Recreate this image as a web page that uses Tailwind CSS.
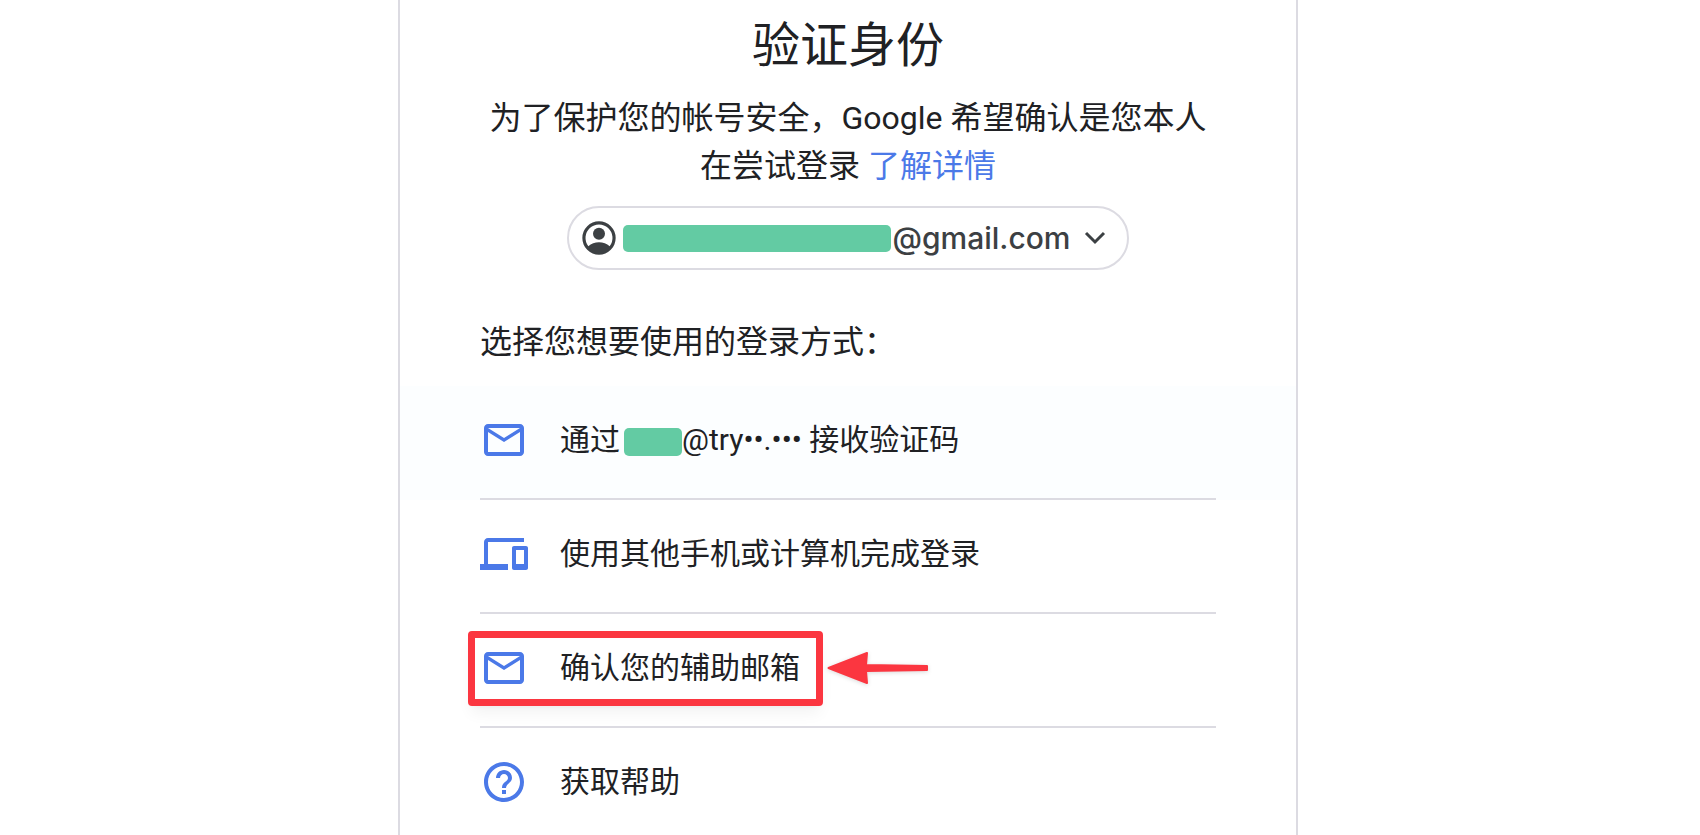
<!DOCTYPE html>
<html lang="zh-CN">
<head>
  <meta charset="utf-8">
  <meta name="viewport" content="width=device-width, initial-scale=1.0">
  <title>验证身份</title>
  <script src="https://cdn.jsdelivr.net/npm/@tailwindcss/browser@4"></script>
</head>
<body class="bg-white text-[#202124] font-[Roboto,'Noto_Sans_CJK_SC',sans-serif]">

  <div class="h-screen overflow-hidden flex justify-center pr-1">
    <main class="w-full max-w-[900px] border-x-2 border-[#dcdbe2] px-20 pt-3.5 h-max min-h-full">

      <h1 class="text-5xl leading-16 text-center">验证身份</h1>

      <p class="mt-4 text-[32px] leading-12 text-center">为了保护您的帐号安全，Google 希望确认是您本人<br>在尝试登录 <a href="#" class="text-[#4b79e8]">了解详情</a></p>

      <div class="mt-4 flex justify-center">
        <button type="button" class="h-16 flex items-center border-2 border-[#dcdbe2] rounded-full pl-2.5 pr-3.5 text-[#3c4043]">
          <svg class="size-10" viewBox="0 0 24 24" fill="currentColor">
            <path d="M12 2a10 10 0 1 0 0 20a10 10 0 0 0 0-20zM5.6 16.9A8.1 8.1 0 1 1 18.4 16.9C16.7 15.2 14.4 14.5 12 14.5S7.3 15.2 5.6 16.9z"/>
            <circle cx="12" cy="9.5" r="3.6"/>
          </svg>
          <span class="ml-1 w-[268px] h-[27px] rounded-[5px] bg-[#63cba3]"></span>
          <span class="ml-px text-3xl leading-10 font-medium font-[Inter,sans-serif]">@gmail.com</span>
          <svg class="ml-1.5 size-9" viewBox="0 0 36 36" fill="none" stroke="currentColor" stroke-width="3">
            <path d="M9 13l9 9l9-9"/>
          </svg>
        </button>
      </div>

      <h2 class="mt-12 text-[32px] leading-12">选择您想要使用的登录方式：</h2>

      <ul class="mt-5 text-3xl leading-12">
        <li class="-mx-20 px-20 bg-[#fcfeff]">
          <a href="#" class="flex items-center gap-8 pt-7.5 pb-8.5 border-b-2 border-[#dcdbe2]">
            <svg class="size-12 shrink-0 text-[#4b79e8]" viewBox="0 0 24 24" fill="currentColor">
              <path d="M20 4H4c-1.1 0-2 .9-2 2v12c0 1.1.9 2 2 2h16c1.1 0 2-.9 2-2V6c0-1.1-.9-2-2-2zm0 14H4V8l8 5 8-5v10zm-8-7L4 6h16l-8 5z"/>
            </svg>
            <span class="flex items-center">通过<span class="ml-1 mt-1 w-[58px] h-7 rounded-[5px] bg-[#63cba3]"></span>@try••.••• 接收验证码</span>
          </a>
        </li>
        <li>
          <a href="#" class="flex items-center gap-8 pt-7.5 pb-8.5 border-b-2 border-[#dcdbe2]">
            <svg class="size-12 shrink-0 text-[#4b79e8]" viewBox="0 0 24 24" fill="currentColor">
              <path d="M4 6h18V4H4c-1.1 0-2 .9-2 2v11H0v3h14v-3H4V6zm19 2h-6c-.55 0-1 .45-1 1v10c0 .55.45 1 1 1h6c.55 0 1-.45 1-1V9c0-.55-.45-1-1-1zm-1 9h-4v-7h4v7z"/>
            </svg>
            <span>使用其他手机或计算机完成登录</span>
          </a>
        </li>
        <li class="relative">
          <a href="#" class="flex items-center gap-8 pt-7.5 pb-8.5 border-b-2 border-[#dcdbe2]">
            <svg class="size-12 shrink-0 text-[#4b79e8]" viewBox="0 0 24 24" fill="currentColor">
              <path d="M20 4H4c-1.1 0-2 .9-2 2v12c0 1.1.9 2 2 2h16c1.1 0 2-.9 2-2V6c0-1.1-.9-2-2-2zm0 14H4V8l8 5 8-5v10zm-8-7L4 6h16l-8 5z"/>
            </svg>
            <span>确认您的辅助邮箱</span>
          </a>
          <!-- highlight frame and arrow -->
          <div class="absolute -left-3 top-[17px] w-[355px] h-[75px] border-7 border-[#fb3640] rounded-sm shadow-lg shadow-black/5 pointer-events-none"></div>
          <svg class="absolute left-[347px] top-[34px] w-[104px] h-10 drop-shadow-sm pointer-events-none" viewBox="0 0 104 40" fill="#fb3640" stroke="#fb3640" stroke-width="2" stroke-linejoin="round">
            <path d="M1.5 20L40 5L39 17L100 18V22L39 23L40 35z"/>
          </svg>
        </li>
        <li>
          <a href="#" class="flex items-center gap-8 pt-7.5 pb-8.5">
            <svg class="size-12 shrink-0 text-[#4b79e8]" viewBox="0 0 24 24" fill="currentColor">
              <path d="M11 18h2v-2h-2v2zm1-16C6.48 2 2 6.48 2 12s4.48 10 10 10 10-4.48 10-10S17.52 2 12 2zm0 18c-4.41 0-8-3.59-8-8s3.59-8 8-8 8 3.59 8 8-3.59 8-8 8zm0-14c-2.21 0-4 1.79-4 4h2c0-1.1.9-2 2-2s2 .9 2 2c0 2-3 1.75-3 5h2c0-2.25 3-2.5 3-5 0-2.21-1.79-4-4-4z"/>
            </svg>
            <span>获取帮助</span>
          </a>
        </li>
      </ul>

    </main>
  </div>

</body>
</html>
